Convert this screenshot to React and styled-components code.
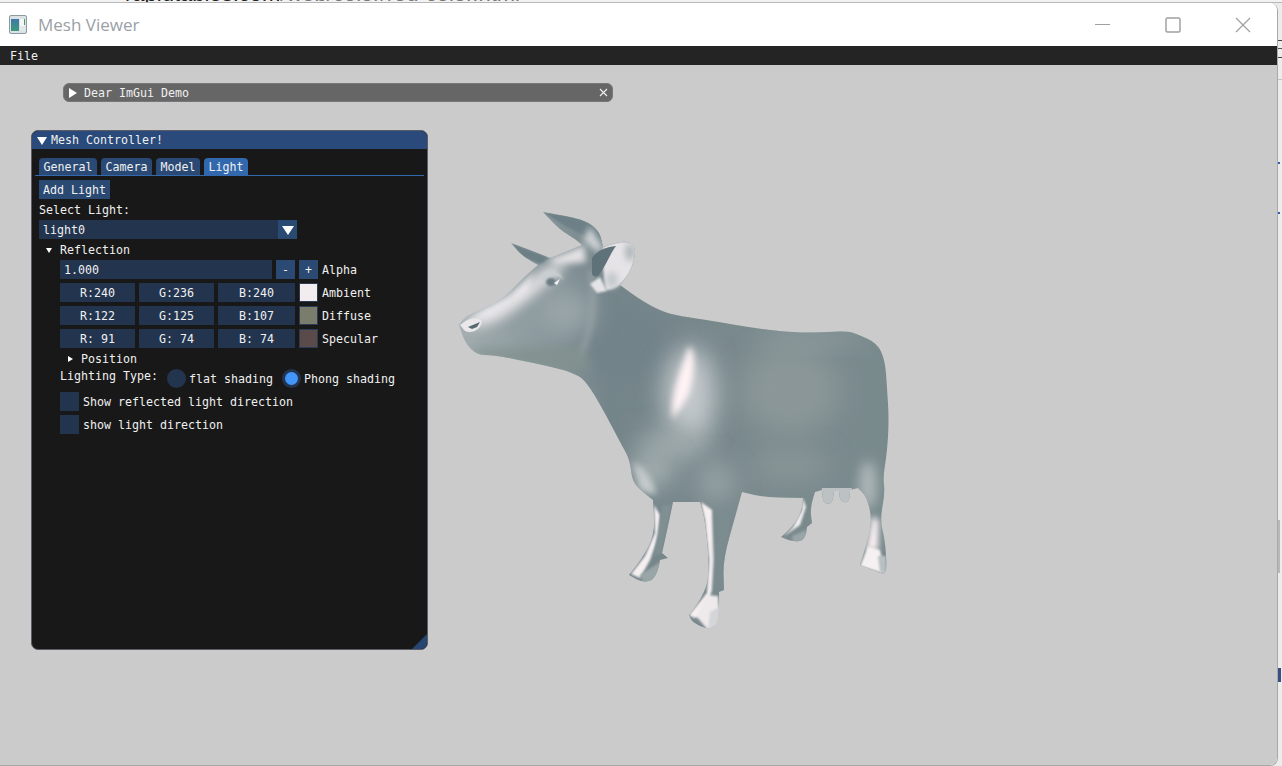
import styled, {createGlobalStyle} from 'styled-components'

const GlobalStyle = createGlobalStyle`
    html, body {
        margin: 0;
        padding: 0;
        width: 1282px;
        height: 766px;
        overflow: hidden;
        background: #eeeeee;
    }
    * {
        box-sizing: border-box;
    }
`

const mono = `"DejaVu Sans Mono", "Liberation Mono", monospace`

const Page = styled.div`
    width: 1282px;
    height: 766px;
    display: flex;
    flex-direction: column;
    background: #ececec;
    overflow: hidden;
`

const BrowserStrip = styled.div`
    height: 3px;
    flex: none;
    overflow: hidden;
    background: #f2f2f2;
    border-bottom: 1px solid #b8b8b8;
    padding-left: 125px;
    font: 22px/22px "Liberation Sans", sans-serif;
    color: #222;
    white-space: nowrap;
    div {
        margin-top: -17px;
    }
    span {
        color: #777;
    }
`

const Desktop = styled.div`
    flex: 1;
    display: flex;
    min-height: 0;
`

const Window = styled.div`
    width: 1278px;
    display: flex;
    flex-direction: column;
    overflow: hidden;
    border-radius: 0 8px 8px 0;
    background: #fff;
    border-right: 1px solid #a9a9a9;
    border-bottom: 1px solid #a9a9a9;
`

const TitleBar = styled.div`
    height: 43px;
    flex: none;
    display: flex;
    align-items: center;
    background: #fff;
    padding-left: 9px;
`

const AppIcon = styled.svg`
    width: 18px;
    height: 19px;
    margin-right: 11px;
`

const TitleText = styled.div`
    flex: 1;
    font: 17px "Open Sans", sans-serif;
    color: #9aa0a6;
`

const WinButton = styled.div`
    width: 70px;
    height: 43px;
    padding-left: 2px;
    display: flex;
    align-items: center;
    justify-content: center;
    svg {
        width: 16px;
        height: 16px;
        stroke: #a0a0a0;
        fill: none;
    }
`

const MenuBar = styled.div`
    height: 19px;
    flex: none;
    background: #242424;
    color: #f2f2f2;
    padding-left: 10px;
    font: 11.63px/20px ${mono};
`

const Canvas = styled.div`
    flex: 1;
    position: relative;
    background: #cbcbcb;
`

const CollapsedWindow = styled.div`
    position: absolute;
    left: 63px;
    top: 18px;
    width: 550px;
    height: 19px;
    display: flex;
    align-items: center;
    background: #666666;
    border: 1px solid #77777a;
    border-radius: 6px;
    color: #f0f0f0;
    padding: 1px 5px 0;
    font: 11.63px ${mono};
`

const Panel = styled.div`
    position: absolute;
    left: 31px;
    top: 65px;
    width: 397px;
    height: 520px;
    display: flex;
    flex-direction: column;
    background: #181818;
    border: 1px solid #5c5c66;
    border-radius: 7px;
    overflow: hidden;
    color: #f0f0f0;
    font: 11.63px/13px ${mono};
`

const PanelTitle = styled.div`
    height: 18px;
    flex: none;
    display: flex;
    align-items: center;
    padding: 1px 0 0 5px;
    background: #294a7a;
`

const Arrow = styled.i`
    width: 0;
    height: 0;
    flex: none;
    margin-right: ${({$gap}) => $gap}px;
    border-style: solid;
    border-color: transparent;
    ${({$size, $open}) => $open
        ? `border-width: ${$size}px ${$size * 0.7}px 0; border-top-color: #fff;`
        : `border-width: ${$size * 0.65}px 0 ${$size * 0.65}px ${$size}px; border-left-color: #fff;`}
`

const TabBar = styled.div`
    margin: 9px 3px 0;
    padding-left: 4px;
    height: 18px;
    flex: none;
    display: flex;
    gap: 4px;
    border-bottom: 1px solid #3268ad;
`

const Tab = styled.div`
    height: 17px;
    padding: 1px 4.5px 0;
    display: flex;
    align-items: center;
    border-radius: 4px 4px 0 0;
    background: ${({$active}) => ($active ? '#3268ad' : '#2a4a75')};
`

const Content = styled.div`
    padding: 4px 7px;
    display: flex;
    flex-direction: column;
    gap: 4px;
`

const Button = styled.div`
    height: 19px;
    width: ${({$w}) => ($w ? `${$w}px` : 'auto')};
    flex: none;
    padding-top: 1px;
    display: flex;
    align-items: center;
    justify-content: center;
    background: #2a4a73;
`

const Label = styled.div`
    height: 13px;
    padding-top: 1px;
`

const Combo = styled.div`
    width: 258px;
    height: 19px;
    display: flex;
    align-items: center;
    background: #23344f;
    padding-left: 4px;
`

const ComboValue = styled.div`
    flex: 1;
    padding-top: 1px;
`

const TreeNode = styled.div`
    display: flex;
    align-items: center;
    height: 13px;
    padding: 1px 0 0 ${({$indent}) => $indent}px;
`

const Section = styled.div`
    padding-left: 21px;
    display: flex;
    flex-direction: column;
    gap: 4px;
`

const Row = styled.div`
    display: flex;
    align-items: center;
    gap: 4px;
    height: 19px;
`

const RowLabel = styled.div`
    padding-top: 1px;
`

const Field = styled.div`
    width: ${({$w}) => $w}px;
    height: 19px;
    flex: none;
    display: flex;
    align-items: center;
    justify-content: ${({$left}) => ($left ? 'flex-start' : 'center')};
    padding: 1px 0 0 ${({$left}) => ($left ? '4px' : '0')};
    background: #23344f;
`

const Swatch = styled.div`
    width: 19px;
    height: 19px;
    flex: none;
    background: ${({$color}) => $color};
    border: 1px solid #2a3b55;
`

const LightingRow = styled.div`
    display: flex;
    height: 19px;
`

const LightingLabel = styled.div`
    width: 107px;
    padding-top: 1px;
`

const Radio = styled.div`
    display: flex;
    align-items: center;
    gap: 3px;
    margin-right: ${({$gap}) => $gap}px;
    span {
        padding-top: 1px;
    }
    i {
        width: 19px;
        height: 19px;
        border-radius: 50%;
        background: #23344f;
        display: flex;
        align-items: center;
        justify-content: center;
    }
    b {
        width: 13px;
        height: 13px;
        border-radius: 50%;
        background: #4296fa;
    }
`

const Check = styled.div`
    display: flex;
    align-items: center;
    gap: 4px;
    height: 19px;
    span {
        padding-top: 1px;
    }
    i {
        width: 19px;
        height: 19px;
        background: #23344f;
    }
`

const ResizeGrip = styled.div`
    position: absolute;
    right: 0;
    bottom: 0;
    width: 15px;
    height: 15px;
    background: #26456f;
    clip-path: polygon(100% 0, 100% 100%, 0 100%);
`

const CloseX = styled.svg`
    margin: -2px -1px 0 auto;
    width: 9px;
    height: 9px;
    stroke: #f0f0f0;
`

const RightStrip = styled.div`
    width: 4px;
    flex: none;
    display: flex;
    flex-direction: column;
    background: #ececec;
`

const StripMark = styled.div`
    height: ${({$h}) => $h}px;
    margin-top: ${({$top}) => $top}px;
    width: ${({$w}) => $w || 4}px;
    background: ${({$color}) => $color};
`

const CowSvg = styled.svg`
    position: absolute;
    left: 455px;
    top: 140px;
    width: 440px;
    height: 430px;
`

// points of the outline, third value marks a sharp corner
const smooth = (pts) => {
    let d = `M${pts[0][0]} ${pts[0][1]}`
    for (let i = 1; i <= pts.length; i++) {
        const p = pts[i % pts.length]
        const n = pts[(i + 1) % pts.length]
        if (p[2]) {
            d += ` L${p[0]} ${p[1]}`
        } else {
            d += ` Q${p[0]} ${p[1]} ${(p[0] + n[0]) / 2} ${(p[1] + n[1]) / 2}`
        }
    }
    return d + ' Z'
}

const COW = smooth([
    [459, 325, 1], [464, 317], [480, 310], [503, 299], [523, 278], [538, 265, 1], [523, 257], [511, 243, 1], [530, 250], [550, 258, 1],
    [563, 253], [582, 245, 1], [577, 240], [560, 230], [543, 212, 1], [573, 217], [590, 223], [600, 233], [603, 247, 1],
    [620, 241], [633, 243], [636, 253], [630, 273], [620, 285, 1], [640, 300], [663, 312], [680, 316], [713, 321], [753, 328], [797, 333], [830, 332], [847, 331], [857, 334],
    [877, 343], [885, 360], [887, 387], [889, 420], [887, 453], [883, 477], [885, 493], [880, 520], [885, 540], [887, 570], [883, 574, 1], [860, 565, 1], [868, 540], [872, 520], [867, 497], [858, 488, 1],
    [850, 490, 1], [850, 500], [845, 503], [840, 500], [839, 491, 1], [834, 491, 1], [833, 502], [828, 504], [823, 502], [822, 490, 1], [815, 492, 1], [810, 507], [812, 523, 1], [807, 527, 1], [806, 540], [793, 542], [781, 537, 1], [793, 527], [802, 510], [803, 498, 1],
    [767, 498], [742, 492, 1], [735, 517], [723, 560], [724, 590, 1], [719, 592, 1], [720, 623], [708, 630], [692, 622], [689, 615, 1], [707, 593], [709, 560], [705, 520], [700, 502, 1], [673, 502, 1], [670, 517], [662, 553, 1], [668, 558, 1], [660, 560, 1], [657, 578], [643, 583], [629, 575, 1], [643, 558], [655, 533], [653, 500, 1],
    [640, 490], [632, 480], [630, 460], [620, 442], [607, 417], [590, 387], [577, 373], [530, 362], [493, 355], [477, 355], [465, 343],
])

const Cow = () => (
    <CowSvg viewBox="455 205 440 430">
        <defs>
            <clipPath id="cowClip"><path d={COW} /></clipPath>
            <linearGradient id="cowBase" x1="0" y1="0" x2="1" y2="0">
                <stop offset="0" stopColor="#a4aeb1" />
                <stop offset="0.35" stopColor="#74858a" />
                <stop offset="0.7" stopColor="#7a8a8d" />
                <stop offset="1" stopColor="#798a8d" />
            </linearGradient>
            <filter id="b1" x="-50%" y="-50%" width="200%" height="200%"><feGaussianBlur stdDeviation="1" /></filter>
            <filter id="b3" x="-50%" y="-50%" width="200%" height="200%"><feGaussianBlur stdDeviation="3" /></filter>
            <filter id="b6" x="-50%" y="-50%" width="200%" height="200%"><feGaussianBlur stdDeviation="6" /></filter>
            <filter id="b12" x="-80%" y="-80%" width="260%" height="260%"><feGaussianBlur stdDeviation="12" /></filter>
        </defs>
        <path d={COW} fill="url(#cowBase)" />
        <g clipPath="url(#cowClip)">
            {/* body */}
            <ellipse cx="790" cy="390" rx="50" ry="45" fill="#8a9698" filter="url(#b12)" />
            <ellipse cx="810" cy="338" rx="55" ry="7" fill="#929ea0" filter="url(#b12)" />
            <ellipse cx="790" cy="465" rx="40" ry="16" fill="#889597" filter="url(#b12)" />
            <ellipse cx="625" cy="345" rx="50" ry="38" fill="#72838a" filter="url(#b12)" />
            {/* head */}
            <path d="M466 322 C490 312 520 292 545 268 L566 262 C560 280 530 300 505 316 C488 326 472 330 466 322 Z" fill="#e8e5e8" filter="url(#b6)" />
            <path d="M463 325 L482 311 L510 297 L535 272 L528 292 L490 316 Z" fill="#efecef" filter="url(#b3)" />
            <ellipse cx="565" cy="312" rx="28" ry="24" fill="#9aa5a8" filter="url(#b12)" />
            <path d="M590 270 C596 300 592 335 578 358" fill="none" stroke="#9ba6a9" strokeWidth="4" filter="url(#b3)" />
            <path d="M470 348 C510 352 550 345 585 350 L590 372 L480 358 Z" fill="#82928f" filter="url(#b6)" />
            {/* horns */}
            <path d="M543 212 L573 217 L590 223 L600 233 L603 247 L590 238 L565 226 Z" fill="#6d8087" filter="url(#b1)" />
            <path d="M590 226 L603 247 L598 253 L583 240 Z" fill="#ccd0d2" filter="url(#b3)" />
            <path d="M511 243 L550 258 L540 264 L523 257 Z" fill="#6c7f85" filter="url(#b1)" />
            <path d="M548 260 L584 245 L586 262 L556 265 Z" fill="#e2e0e2" filter="url(#b3)" />
            {/* ear */}
            <path d="M603 247 C612 242 626 240 634 243 C637 250 636 262 630 273 C625 282 616 290 606 290 C604 280 602 262 603 247 Z" fill="#e6e3e6" filter="url(#b1)" />
            <ellipse cx="630" cy="252" rx="5" ry="9" fill="#aeb7ba" filter="url(#b3)" />
            <ellipse cx="612" cy="280" rx="6" ry="8" fill="#c2c8ca" filter="url(#b3)" />
            <path d="M592 258 C596 252 604 247 616 246 C610 254 606 266 598 276 C595 277 593 276 592 274 Z" fill="#5f7279" />
            <path d="M590 284 L597 293 L607 291 L600 277 Z" fill="#e4e4e6" filter="url(#b1)" />
            {/* eye */}
            <path d="M541 277 C545 268 558 268 564 280 C557 274 549 273 544 283 Z" fill="#c9ced0" filter="url(#b1)" />
            <ellipse cx="551" cy="282" rx="5" ry="4" fill="#6a7c82" filter="url(#b1)" />
            <path d="M554 283 L560 279 L557 285 Z" fill="#f4f2f4" />
            {/* nose */}
            <path d="M460 325 C468 318 476 316 482 321 C481 330 472 334 465 331 Z" fill="#e9e7ea" />
            <path d="M468 327 L480 322 L477 327 L472 329 Z" fill="#56696f" />
            {/* shoulder */}
            <ellipse cx="690" cy="395" rx="26" ry="48" fill="#c2c8cb" filter="url(#b12)" />
            <path d="M689 346 C697 352 694 375 690 392 C682 408 677 412 673 420 C670 395 678 378 689 346 Z" fill="#fff3f5" filter="url(#b3)" />
            <ellipse cx="672" cy="445" rx="34" ry="14" fill="#a2acae" filter="url(#b12)" />
            <ellipse cx="652" cy="470" rx="22" ry="16" fill="#a9b2b4" filter="url(#b12)" />
            <path d="M633 462 C645 468 654 480 656 495 L640 490 Z" fill="#c4cacc" filter="url(#b3)" />
            {/* near front leg */}
            <ellipse cx="716" cy="482" rx="18" ry="20" fill="#98a3a6" filter="url(#b12)" />
            <path d="M701 502 L712 510 L714 560 L712 590 L704 615 L694 618 L689 615 L707 593 L709 560 L705 520 Z" fill="#f7eff1" filter="url(#b1)" />
            <path d="M696 616 L707 595 L718 596 L720 623 L708 630 Z" fill="#eeeaec" filter="url(#b1)" />
            <path d="M716 515 L736 505 L723 560 L724 590 L716 590 Z" fill="#7c8c90" filter="url(#b3)" />
            <path d="M710 612 L721 606 L720 625 L708 630 Z" fill="#d4d5d8" filter="url(#b1)" />
            {/* far front leg */}
            <path d="M654 505 L660 515 L659 535 L650 560 L640 578 L631 574 L645 556 L655 533 Z" fill="#f5eff1" filter="url(#b1)" />
            <path d="M640 575 L660 562 L658 578 L644 584 Z" fill="#99a5a7" filter="url(#b1)" />
            <path d="M662 505 L672 505 L662 553 L654 556 Z" fill="#7f8f92" filter="url(#b1)" />
            {/* far back leg */}
            <path d="M803 498 L806 507 L800 525 L783 537 L793 527 L802 510 Z" fill="#f2eeef" filter="url(#b1)" />
            <path d="M792 536 L806 530 L806 541 L793 543 Z" fill="#99a5a7" filter="url(#b1)" />
            {/* near back leg */}
            <ellipse cx="868" cy="485" rx="9" ry="24" fill="#adb6b8" filter="url(#b6)" />
            <path d="M872 516 L879 520 L878 550 L866 550 Z" fill="#fdf3f5" filter="url(#b3)" />
            <path d="M860 566 L868 546 L880 550 L885 574 Z" fill="#f5f0f2" filter="url(#b1)" />
            <path d="M878 556 L886 556 L886 574 L880 572 Z" fill="#b8bfc2" filter="url(#b1)" />
            {/* teats */}
            <path d="M822 488 L852 488 L852 505 L820 505 Z" fill="#bcc2c4" />
        </g>
    </CowSvg>
)

const colorRows = [
    {r: 'R:240', g: 'G:236', b: 'B:240', color: '#f0ecf0', name: 'Ambient'},
    {r: 'R:122', g: 'G:125', b: 'B:107', color: '#7a7d6b', name: 'Diffuse'},
    {r: 'R: 91', g: 'G: 74', b: 'B: 74', color: '#5b4a4a', name: 'Specular'},
]

const App = () => {
    return (
        <Page>
            <GlobalStyle />
            <BrowserStrip><div>rapidtables.com<span>/web/color/red-color.html</span></div></BrowserStrip>
            <Desktop>
                <Window>
                    <TitleBar>
                        <AppIcon viewBox="0 0 18 19">
                            <defs>
                                <linearGradient id="iconPane" x1="0" y1="0" x2="0" y2="1">
                                    <stop offset="0" stopColor="#3f78a8" />
                                    <stop offset="1" stopColor="#3c9a78" />
                                </linearGradient>
                            </defs>
                            <rect x="0.5" y="0.5" width="17" height="18" rx="1.5" fill="#d9e2e6" stroke="#8d9aa0" />
                            <rect x="2" y="4" width="8" height="12" fill="url(#iconPane)" />
                            <rect x="11" y="4" width="5" height="7" fill="#f6f7f5" />
                            <rect x="15" y="4" width="1" height="6" fill="#4c9a68" />
                            <rect x="11" y="11" width="5" height="5" fill="#e3e8ea" />
                        </AppIcon>
                        <TitleText>Mesh Viewer</TitleText>
                        <WinButton><svg viewBox="0 0 16 16"><path d="M0 7.5H15" /></svg></WinButton>
                        <WinButton><svg viewBox="0 0 16 16"><rect x="1" y="1" width="14" height="14" rx="1.5" strokeWidth="1.5" /></svg></WinButton>
                        <WinButton><svg viewBox="0 0 16 16"><path d="M1 1L15 15M15 1L1 15" strokeWidth="1.2" /></svg></WinButton>
                    </TitleBar>
                    <MenuBar>File</MenuBar>
                    <Canvas>
                        <CollapsedWindow>
                            <Arrow $size={8} $gap={7} />
                            Dear ImGui Demo
                            <CloseX viewBox="0 0 9 9"><path d="M1 1L8 8M8 1L1 8" strokeWidth="1.1" /></CloseX>
                        </CollapsedWindow>
                        <Panel>
                            <PanelTitle>
                                <Arrow $open $size={8} $gap={4} />
                                Mesh Controller!
                            </PanelTitle>
                            <TabBar>
                                <Tab>General</Tab>
                                <Tab>Camera</Tab>
                                <Tab>Model</Tab>
                                <Tab $active>Light</Tab>
                            </TabBar>
                            <Content>
                                <Button $w={71}>Add Light</Button>
                                <Label>Select Light:</Label>
                                <Combo>
                                    <ComboValue>light0</ComboValue>
                                    <Button $w={19}><Arrow $open $size={9} $gap={0} /></Button>
                                </Combo>
                                <TreeNode $indent={7}>
                                    <Arrow $open $size={5} $gap={8} />
                                    Reflection
                                </TreeNode>
                                <Section>
                                    <Row>
                                        <Field $w={212} $left>1.000</Field>
                                        <Button $w={19}>-</Button>
                                        <Button $w={19}>+</Button>
                                        <RowLabel>Alpha</RowLabel>
                                    </Row>
                                    {colorRows.map((row) => (
                                        <Row key={row.name}>
                                            <Field $w={75}>{row.r}</Field>
                                            <Field $w={75}>{row.g}</Field>
                                            <Field $w={77}>{row.b}</Field>
                                            <Swatch $color={row.color} />
                                            <RowLabel>{row.name}</RowLabel>
                                        </Row>
                                    ))}
                                    <TreeNode $indent={8}>
                                        <Arrow $size={5} $gap={8} />
                                        Position
                                    </TreeNode>
                                    <LightingRow>
                                        <LightingLabel>Lighting Type:</LightingLabel>
                                        <Radio $gap={9}><i /><span>flat shading</span></Radio>
                                        <Radio><i><b /></i><span>Phong shading</span></Radio>
                                    </LightingRow>
                                    <Check><i /><span>Show reflected light direction</span></Check>
                                    <Check><i /><span>show light direction</span></Check>
                                </Section>
                            </Content>
                            <ResizeGrip />
                        </Panel>
                        <Cow />
                    </Canvas>
                </Window>
                <RightStrip>
                    <StripMark $top={37} $h={1} $color="#444" />
                    <StripMark $top={7} $h={1} $color="#555" />
                    <StripMark $top={8} $h={1} $color="#444" />
                    <StripMark $top={21} $h={1} $color="#c4c4c4" />
                    <StripMark $top={82} $h={2} $w={2} $color="#2f5fa8" />
                    <StripMark $top={48} $h={2} $w={2} $color="#2f5fa8" />
                    <StripMark $top={306} $h={53} $w={2} $color="#b9b9b9" />
                    <StripMark $top={95} $h={14} $w={3} $color="#3a4f80" />
                </RightStrip>
            </Desktop>
        </Page>
    )
}

export default App
